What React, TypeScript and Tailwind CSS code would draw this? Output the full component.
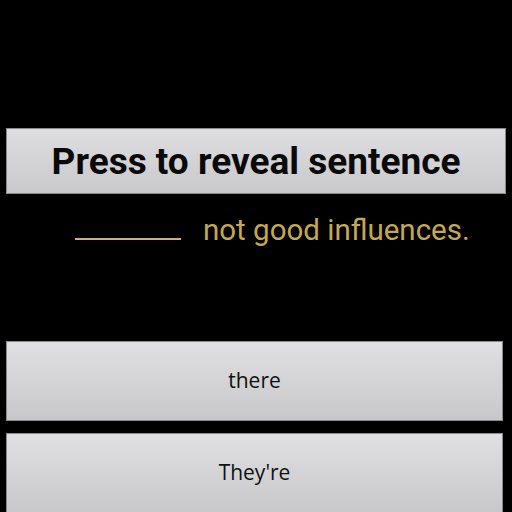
export default function App() {
  return (
    <div className="h-[512px] w-[512px] overflow-hidden bg-black" style={{ fontFamily: 'Roboto, "Open Sans", sans-serif' }}>
      <div className="h-[128px]" />
      <button className="ml-[6px] flex h-[66px] w-[500px] items-center justify-center border border-[#8a8a8c] bg-gradient-to-b from-[#dedee0] to-[#c9c9cb] pt-[2px] font-['Roboto',sans-serif] text-[37px] font-bold text-[#0a0a0a]">
        Press to reveal sentence
      </button>
      <div className="mt-[16px] flex h-[36px] items-end pl-[75px] text-[29.5px] leading-none text-[#c6a752]">
        <span className="mb-[6px] inline-block w-[106px] border-b-2 border-[#cdb272]" />
        <span className="ml-[22px] pb-[1px]">not good influences.</span>
      </div>
      <div className="h-[95px]" />
      <div className="flex flex-col gap-[12px] pl-[6px]">
        <button className="flex h-[80px] w-[497px] items-center justify-center border border-[#8a8a8c] bg-gradient-to-b from-[#e0e0e2] to-[#c8c8ca] font-['Open_Sans',sans-serif] text-[21px] text-[#111]">
          there
        </button>
        <button className="flex h-[80px] w-[497px] items-center justify-center border border-[#8a8a8c] bg-gradient-to-b from-[#e0e0e2] to-[#c8c8ca] font-['Open_Sans',sans-serif] text-[21px] text-[#111]">
          They're
        </button>
      </div>
    </div>
  );
}
